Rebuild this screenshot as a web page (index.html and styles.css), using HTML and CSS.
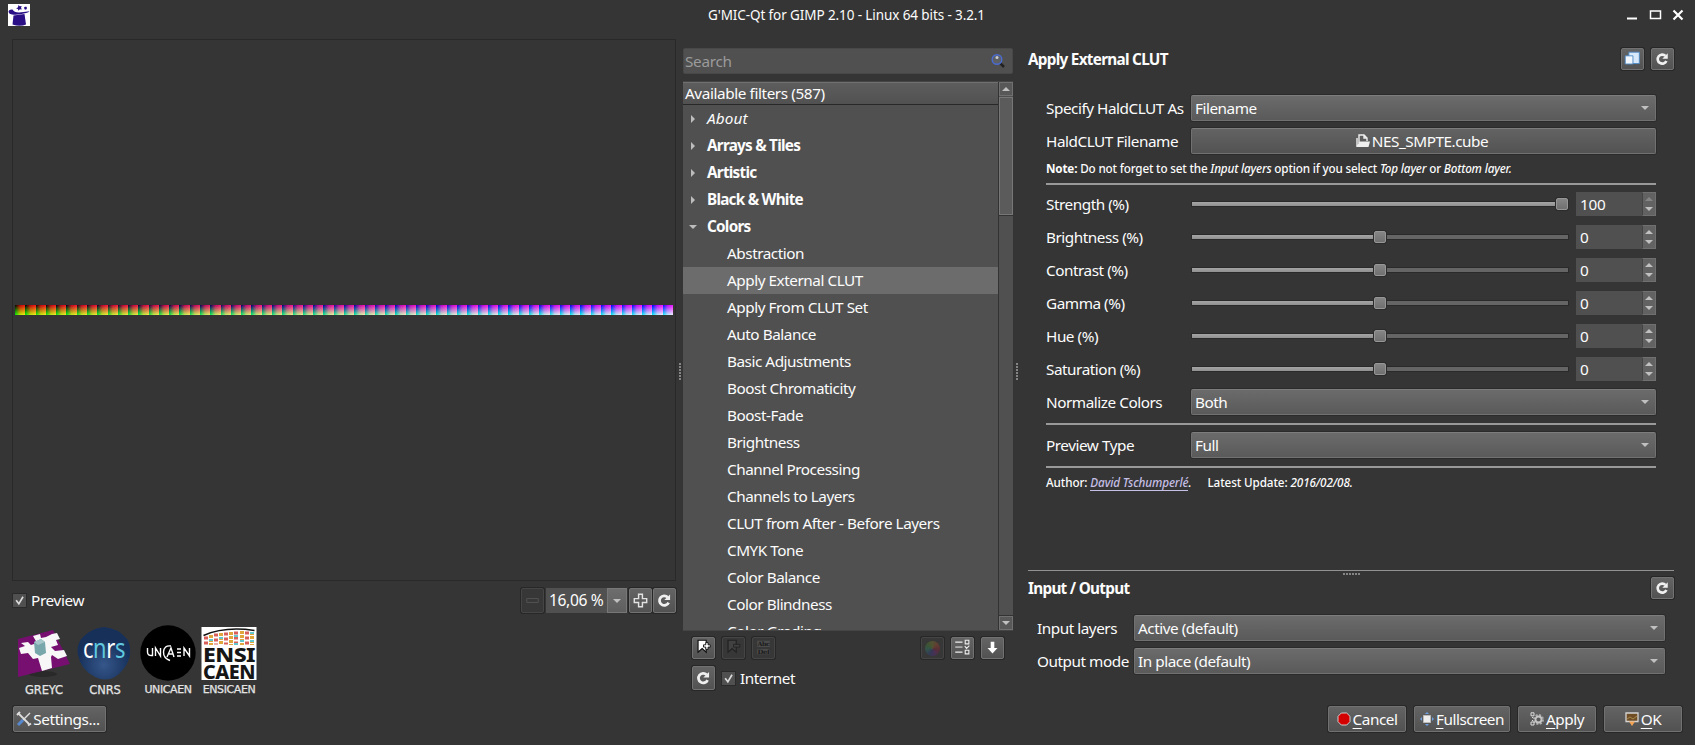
FILE: index.html
```
<!DOCTYPE html>
<html lang="en">
<head>
<meta charset="utf-8">
<title>G'MIC-Qt for GIMP 2.10 - Linux 64 bits - 3.2.1</title>
<link rel="stylesheet" href="styles.css">
</head>
<body>
<svg class="sprite" aria-hidden="true">
  <symbol id="reload" viewBox="0 0 22 22"><path d="M15.3 13.2A5 5 0 1 1 14.3 7.6" fill="none" stroke="#f0f0f0" stroke-width="2.9"/><path d="M16.8 4.6v6h-6z" fill="#f0f0f0"/></symbol>
  <symbol id="check" viewBox="0 0 14 14"><path d="M3.4 6.8l2.9 3.8L10.8 3" fill="none" stroke="#dcdcdc" stroke-width="1.8"/></symbol>
</svg>
<header class="titlebar">
  <svg class="app-icon" viewBox="0 0 22 22"><path fill="#fff" d="M0 0h22v22H0z"/><g fill="#2a0f86"><path d="M5.500 11.500l11-1.500 1.500 10.500q-6 2.500-13.500 0z"/><path d="M.5 8q0-2.800 4-2.500Q6 8.500 11 8.500q4-.3 10.500-1.300Q21 8.300 18 9 10 11.500 4 10.500 1 10 .5 8z"/><path d="M10.500 1l1.200 1.300 2-.3-.7 1.700.8 1.800-2-.2-1.300 1.500-.6-1.800L8 4.300l1.900-.9z"/><path d="M16 3.500l1-.7 1.500 0 .5 1.500-1 1.400-1.500-.4z"/></g></svg>
  <h1>G'MIC-Qt for GIMP 2.10 - Linux 64 bits - 3.2.1</h1>
  <svg class="window-controls" viewBox="0 0 60 22"><path d="M0 14.500h10" stroke="#fff" stroke-width="2"/><path d="M23.500 7h10v7.500h-10zM23 7h11" fill="none" stroke="#fff" stroke-width="1.500"/><path d="M46.500 6.500l9 9m0-9l-9 9" stroke="#fff" stroke-width="2.200"/></svg>
</header>

<main>
  <section class="preview-panel">
    <div class="preview"><div class="clut-strip"></div></div>
    <div class="preview-bar">
      <svg class="checkbox"><use href="#check"/></svg><span class="grow">Preview</span>
      <span class="btn off"><svg viewBox="0 0 22 24"><path d="M5 10h12v4H5z" fill="none" stroke="#555"/></svg></span>
      <span class="zoom"><span>16,06 %</span><i class="zoom-drop"><b class="down"></b></i></span>
      <span class="btn"><svg viewBox="0 0 22 24"><path d="M9 5.500h4v4.500h4.500v4H13v4.500H9V14H4.500v-4H9z" fill="none" stroke="#e2e2e2" stroke-width="1.500"/></svg></span>
      <span class="btn"><svg viewBox="0 0 22 22"><use href="#reload"/></svg></span>
    </div>
    <div class="logos">
      <figure class="greyc"><svg viewBox="0 0 56 58"><ellipse cx="27" cy="49" rx="14" ry="3" fill="#292929"/><path fill="#760f70" d="M2 14L37 5l17 34L2 52z"/><path fill="#f7f7f7" d="M17 11l7-2 1 4 5-1 6-3 5-1 3 6-4 1 2 5-7 2 4 4 9-1 3 6-9 3-6-4-1 2 1 11-10 3-4-13-5 1-5-6-7 1-2-6 6-2-4-3 7-1 3 3 6-2z"/><path fill="#77a6ab" d="M18 17l7-3 4 3 1 11-6 3-5-3z"/><path fill="#a6c7ca" d="M18 17l7-3 4 3-7 3z"/></svg><figcaption>GREYC</figcaption></figure>
      <figure class="cnrs"><svg viewBox="0 0 56 58"><defs><radialGradient id="sea" cx="50%" cy="72%"><stop offset="0" stop-color="#36578b"/><stop offset="1" stop-color="#16305a"/></radialGradient></defs><path fill="url(#sea)" d="M27 2q14 1 23 12 4 6 3 17-4 14-15 21-10 5-20 0Q4 45 1 30-1 19 6 12 15 3 27 2z"/><text y="33" font-family="Noto Sans" font-size="28" textLength="42" lengthAdjust="spacingAndGlyphs" x="6"><tspan fill="#fff">c</tspan><tspan fill="#60c8df">n</tspan><tspan fill="#fff">r</tspan><tspan fill="#60c8df">s</tspan></text></svg><figcaption>CNRS</figcaption></figure>
      <figure class="unicaen"><svg viewBox="0 0 56 58"><circle cx="28" cy="28" r="27.700" fill="#000"/><g fill="none" stroke="#fff" stroke-width="1.400"><path d="M7.500 23v4q0 4 5 3.500V23m3 8v-8l5 8v-8M31 21q-7-1-7.500 6-.2 6 6.500 8.500M27 32l4-9 3 9m-5-3h4M37 24h4m-4 3.500h4m-4 3.500h4M44 31v-8l5.500 8v-8"/></g></svg><figcaption>UNICAEN</figcaption></figure>
      <figure class="ensi"><svg viewBox="0 0 56 58"><path fill="#fff" d="M.5 2h55v53H.5z"/><g fill="none" stroke-width="4"><path stroke="#d9605a" stroke-dasharray="3 2" d="M5 11.500v8M15 8.500v11M25 7.500v12M35 6.500v13M46 6.500v13"/><path stroke="#e0a53c" stroke-dasharray="3 1" d="M10 10v10M20 8v12M30 7v13M41 6v14M51 7v13"/><path stroke="#63c7cf" stroke-dasharray="2 6" d="M10 14v6M20 12v8M35 10v10M51 7v13M41 15v5"/></g><path d="M2.500 10.500Q24 1 53.500 5.500" fill="none" stroke="#111" stroke-width="1.500"/><g fill="#161616" font-family="Noto Sans" font-weight="800" font-size="19"><text x="2" y="36.500" textLength="52" lengthAdjust="spacingAndGlyphs">ENSI</text><text x="2" y="53.500" textLength="52" lengthAdjust="spacingAndGlyphs">CAEN</text></g></svg><figcaption>ENSICAEN</figcaption></figure>
    </div>
  </section>

  <div class="grip"></div>

  <section class="filters-panel">
    <div class="search"><span>Search</span><svg viewBox="0 0 16 16"><path d="M10 10l4 4" stroke="#222" stroke-width="2.500"/><circle cx="7" cy="6.500" r="4.800" fill="#5d6064" stroke="#4a6bd0" stroke-width="1.400"/><circle cx="7" cy="4.500" r="1.500" fill="#c9ccd0"/></svg></div>
    <div class="tree">
      <div class="tree-list">
        <div class="tree-head">Available filters (587)</div>
        <ul>
          <li class="cat about"><em>About</em></li>
          <li class="cat bold">Arrays &amp; Tiles</li>
          <li class="cat bold">Artistic</li>
          <li class="cat bold">Black &amp; White</li>
          <li class="cat bold open">Colors</li>
          <li>Abstraction</li>
          <li class="selected">Apply External CLUT</li>
          <li>Apply From CLUT Set</li>
          <li>Auto Balance</li>
          <li>Basic Adjustments</li>
          <li>Boost Chromaticity</li>
          <li>Boost-Fade</li>
          <li>Brightness</li>
          <li>Channel Processing</li>
          <li>Channels to Layers</li>
          <li>CLUT from After - Before Layers</li>
          <li>CMYK Tone</li>
          <li>Color Balance</li>
          <li>Color Blindness</li>
          <li>Color Grading</li>
        </ul>
      </div>
      <div class="scrollbar"><i class="cap"><b class="up"></b></i><i class="thumb"></i><i class="track"></i><i class="cap"><b class="down"></b></i></div>
    </div>
    <div class="tools">
      <span class="btn"><svg viewBox="0 0 22 22"><path d="M5 2.500h9v13l-4.500-4-4.500 4z" fill="#fff" stroke="#111" stroke-width="1.300"/><path d="M13.500 5H16v2.500h2.500V10H16v2.500h-2.500V10H11V7.500h2.500z" fill="#fff" stroke="#111"/></svg></span>
      <span class="btn off"><svg viewBox="0 0 22 22"><path d="M5 2.500h9v13l-4.500-4-4.500 4z" fill="#414141" stroke="#222" stroke-width="1.300"/><path d="M11 7h7v3h-7z" fill="#414141" stroke="#222"/></svg></span>
      <span class="btn off"><svg viewBox="0 0 22 22"><path fill="#4b4b4b" d="M4 3h14v7H4zM4 12h14v6H4z"/><g fill="#1c1c1c" font-family="DejaVu Serif" font-size="6.500" font-weight="700"><text x="4.500" y="8.500" textLength="13" lengthAdjust="spacingAndGlyphs">Abc</text><text x="4.500" y="17.500" textLength="13" lengthAdjust="spacingAndGlyphs">Def</text></g></svg></span>
      <span class="btn off push"><i class="wheel"></i></span>
      <span class="btn"><svg viewBox="0 0 22 22"><path d="M3 4.500h8M3 15.500h8" stroke="#eee" stroke-width="1.300"/><path d="M3 10h8" stroke="#aaa" stroke-width="2"/><path d="M14 2.500h4v4h-4zM14 13.500h4v4h-4zM13.500 9l2 2.500 3-3" fill="none" stroke="#eee" stroke-width="1.200"/></svg></span>
      <span class="btn"><svg viewBox="0 0 22 22"><path d="M9 4h4v7h3.500L11 17l-5.500-6H9z" fill="#fff"/></svg></span>
    </div>
    <div class="tools net">
      <span class="btn"><svg viewBox="0 0 22 22"><use href="#reload"/></svg></span>
      <svg class="checkbox"><use href="#check"/></svg><span>Internet</span>
    </div>
  </section>

  <div class="grip"></div>

  <section class="params-panel">
    <div class="panel-head"><h2>Apply External CLUT</h2>
      <span class="btn"><svg viewBox="0 0 22 22"><path d="M7 3.500h11.500V16H7z" fill="#d7e8fa" stroke="#4c89c4"/><path d="M3 7.500h8.500v9H3z" fill="#f3f8fe" stroke="#4c89c4"/></svg></span>
      <span class="btn"><svg viewBox="0 0 22 22"><use href="#reload"/></svg></span>
    </div>
    <div class="form">
      <div class="row"><label>Specify HaldCLUT As</label><div class="combo">Filename<b class="down"></b></div></div>
      <div class="row"><label>HaldCLUT Filename</label><div class="file"><svg viewBox="0 0 14 14"><path d="M3 9V1h5l3 3v3M8 1v3h3M1 12V4" fill="none" stroke="#eee" stroke-width="1.400"/><path d="M3.500 7.500H14L12.500 13H0z" fill="#eee"/></svg>NES_SMPTE.cube</div></div>
      <p class="note"><strong>Note:</strong> Do not forget to set the <em>Input layers</em> option if you select <em>Top layer</em> or <em>Bottom layer.</em></p>
      <hr>
      <div class="row slider-row"><label>Strength (%)</label><div class="slider"><i class="fill full"></i><i class="knob"></i></div><div class="spin">100<i class="steps max"><b class="up"></b><b class="down"></b></i></div></div>
      <div class="row slider-row"><label>Brightness (%)</label><div class="slider"><i class="fill"></i><i class="knob"></i></div><div class="spin">0<i class="steps"><b class="up"></b><b class="down"></b></i></div></div>
      <div class="row slider-row"><label>Contrast (%)</label><div class="slider"><i class="fill"></i><i class="knob"></i></div><div class="spin">0<i class="steps"><b class="up"></b><b class="down"></b></i></div></div>
      <div class="row slider-row"><label>Gamma (%)</label><div class="slider"><i class="fill"></i><i class="knob"></i></div><div class="spin">0<i class="steps"><b class="up"></b><b class="down"></b></i></div></div>
      <div class="row slider-row"><label>Hue (%)</label><div class="slider"><i class="fill"></i><i class="knob"></i></div><div class="spin">0<i class="steps"><b class="up"></b><b class="down"></b></i></div></div>
      <div class="row slider-row"><label>Saturation (%)</label><div class="slider"><i class="fill"></i><i class="knob"></i></div><div class="spin">0<i class="steps"><b class="up"></b><b class="down"></b></i></div></div>
      <div class="row"><label>Normalize Colors</label><div class="combo">Both<b class="down"></b></div></div>
      <hr class="tight">
      <div class="row"><label>Preview Type</label><div class="combo">Full<b class="down"></b></div></div>
      <hr class="tight">
      <p class="author">Author: <a><em>David Tschumperlé</em></a><em>.</em><span class="update">Latest Update: <em>2016/02/08.</em></span></p>
    </div>
    <div class="divider"><i></i></div>
    <div class="panel-head"><h2>Input / Output</h2><span class="btn"><svg viewBox="0 0 22 22"><use href="#reload"/></svg></span></div>
    <div class="form io">
      <div class="row"><label>Input layers</label><div class="combo">Active (default)<b class="down"></b></div></div>
      <div class="row"><label>Output mode</label><div class="combo">In place (default)<b class="down"></b></div></div>
    </div>
  </section>
</main>

<footer>
  <button class="settings"><svg viewBox="0 0 16 16"><path d="M2 2l11 11" stroke="#ddd" stroke-width="1.800"/><path d="M1 4l3-3M12 14.500l3-2" stroke="#ddd" stroke-width="2"/><path d="M14 2L7 9" stroke="#ddd" stroke-width="1.500"/><path d="M7 9l-5 5" stroke="#5588cf" stroke-width="3"/></svg>Settings...</button>
  <button class="w78"><svg viewBox="0 0 14 14"><path d="M4.300 1h5.400L13 4.300v5.400L9.700 13H4.300L1 9.700V4.300z" fill="#d40000" stroke="#ccc"/></svg><span><u>C</u>ancel</span></button>
  <button class="w96"><svg viewBox="0 0 14 14"><path d="M3.500 3.500h7v7h-7z" fill="#eee" stroke="#bbb"/><path d="M7 0l2 2H5zM7 14l2-2H5zM0 7l2-2v4zM14 7l-2-2v4z" fill="#6b9fe0"/></svg><span><u>F</u>ullscreen</span></button>
  <button class="w78"><svg viewBox="0 0 14 14"><circle cx="8.500" cy="7.500" r="4.300" fill="none" stroke="#aaa" stroke-width="2.400" stroke-dasharray="2 1.370"/><circle cx="8.500" cy="7.500" r="3" fill="none" stroke="#c5c5c5" stroke-width="1.800"/><path d="M1 .8h3v3H1zM1 10h3v3H1zM2.500 5v1M2.500 8v1" fill="none" stroke="#ddd"/></svg><span><u>A</u>pply</span></button>
  <button class="w78"><svg viewBox="0 0 14 14"><path d="M1 1h12v8.500H1z" fill="#6f4e25" stroke="#d5d5d5" stroke-width="1.300"/><path d="M2 7l3-2 3 2 4-3" stroke="#a88850" fill="none"/><path d="M4 9.500h6L7 14z" fill="#f3a456"/></svg><span><u>O</u>K</span></button>
</footer>
</body>
</html>
```
FILE: styles.css
```
* { box-sizing: border-box; margin: 0; padding: 0; }
html { background: #353535; }
body {
  width: 1695px; height: 745px; overflow: hidden;
  display: flex; flex-direction: column;
  background: #353535; color: #fcfcfc;
  font: 15.3px/22px "Noto Sans", sans-serif; letter-spacing: -0.46px;
  white-space: nowrap;
}
i, b.up, b.down { display: block; }
.sprite { position: absolute; width: 0; height: 0; }
.grow { flex: 1; }

.titlebar { height: 31px; padding: 4px 11px 0 8px; display: flex; justify-content: space-between; flex: none; }
.app-icon { width: 22px; height: 22px; margin-right: 36px; }
.titlebar h1 { font-size: 13.5px; font-weight: 400; letter-spacing: -0.1px; }
.window-controls { width: 60px; height: 22px; margin-right: -3px; }

main { display: flex; height: 675px; flex: none; }

.btn {
  width: 23px; height: 23px; flex: none;
  border: 1px solid #727272; border-radius: 2px;
  background: linear-gradient(#646464, #525252);
  box-shadow: 0 0 0 1px #272727;
}
.btn svg { display: block; width: 100%; height: 100%; }
.btn.off { background: #373737; border-color: #454545; }
.checkbox {
  width: 13px; height: 13px; flex: none;
  background: #505050; box-shadow: 0 0 0 1px #2a2a2a; margin: 0 5px 0 1px;
}
.up, .down { width: 0; height: 0; border: 4px solid transparent; }
.down { border-top: 4px solid #c0c0c0; border-bottom: 0; }
.up { border-bottom: 4px solid #c0c0c0; border-top: 0; }

.preview-panel { width: 676px; padding: 8px 0 0 12px; flex: none; }
.preview { height: 542px; border: 1px solid #292929; padding: 265px 2px 0; }
/* HaldCLUT preview: blue grows along the strip, red across each tile, green downwards */
.clut-strip {
  height: 10px;
  background:
    linear-gradient(90deg, #000, #00d 70%, #00f),
    repeating-linear-gradient(90deg, #000 0, #b00 5px, #f01010 10.28px),
    linear-gradient(#000, #0e0);
  background-blend-mode: screen;
}
.preview-bar { height: 26px; margin-top: 6px; display: flex; align-items: center; letter-spacing: -0.36px; }
.preview-bar .btn { height: 25px; margin-left: 1px; }
.zoom { display: flex; width: 81px; height: 25px; margin: 0 1px 0 2px; background: #505050; line-height: 25px; padding-left: 3px; justify-content: space-between; font-size: 15.6px; }
.zoom-drop { width: 20px; background: linear-gradient(#6d6d6d, #5f5f5f); border: 1px solid #777; padding: 10px 0 0 5px; }
.logos { display: flex; margin: 12px 0 0 2px; }
.logos figure { width: 56px; text-align: center; }
.logos svg { display: block; width: 56px; height: 58px; }
.logos figcaption { font: 11.5px/14px "DejaVu Sans", sans-serif; color: #e4e4e4; letter-spacing: -0.1px; -webkit-text-stroke: 0.25px #e4e4e4; }
.logos .greyc { padding-left: 2px; margin-right: -2px; width: 58px; }
.logos .cnrs { margin-left: 7px; }
.logos .unicaen { margin-left: 7px; }
.logos .ensi { margin-left: 5px; }
.logos .unicaen figcaption, .logos .ensi figcaption { font-size: 11px; letter-spacing: -0.4px; }

.grip {
  width: 2px; height: 17px; margin: 332px 0 0 3px; flex: none;
  background: repeating-linear-gradient(#858585 0 2px, transparent 2px 3px);
}

.filters-panel { width: 330px; margin: 17px 0 0 2px; flex: none; }
.search { height: 26px; background: #505050; border: 1px solid #484848; border-radius: 2px; color: #9b9b9b; padding: 0 6px 1px 1px; display: flex; justify-content: space-between; align-items: center; }
.search span { letter-spacing: -0.3px; }
.search svg { width: 16px; height: 16px; }
.tree { display: flex; height: 550px; margin-top: 7px; background: #505050; border: 1px solid #454545; border-left: 0; border-right: 0; overflow: hidden; }
.tree-list { width: 315px; }
.tree-head { height: 23px; padding-left: 2px; line-height: 20px; letter-spacing: -0.4px; background: linear-gradient(#5d5d5d, #515151); border-top: 1px solid #707070; border-bottom: 1px solid #282828; }
.tree ul { list-style: none; }
.tree li { height: 27px; line-height: 27px; padding-left: 44px; }
.tree .cat { padding-left: 8px; display: flex; align-items: center; }
.cat::before { content: ""; border: 4px solid transparent; border-left-color: #bdbdbd; border-right: 0; margin-right: 12px; }
.cat.open::before { border: 4px solid transparent; border-top-color: #bdbdbd; border-bottom: 0; margin: 0 10px 0 -2px; }
.about em { letter-spacing: 0.15px; }
.bold { font-weight: 700; letter-spacing: -0.76px; }
.selected { background: #6c6c6c; }
.scrollbar { width: 15px; border-left: 1px solid #333; display: flex; flex-direction: column; }
.cap { height: 14px; border: 1px solid #707070; padding: 4px 2px; background: #585858; flex: none; }
.thumb { height: 118px; margin-top: 1px; border: 1px solid #777; background: #5b5b5b; flex: none; box-shadow: 0 1px 0 #333; }
.track { flex: 1; border-bottom: 1px solid #333; }
.tools { display: flex; margin: 6px 9px 0; gap: 7px; align-items: center; }
.tools .btn { height: 22px; }
.push { margin-left: auto; }
.net { margin-top: 7px; }
.net .btn { height: 24px; }
.net .checkbox { margin: 0 -2px 0 0; }
.wheel { width: 15px; height: 15px; margin: 3px; border-radius: 50%; opacity: .3; background: conic-gradient(#8f8c24, #c04a26, #a01a34, #71209a, #2b3e9c, #24917b, #4a9a2b, #8f8c24); }

.params-panel { width: 646px; margin: 17px 0 0 10px; flex: none; }
.panel-head { display: flex; align-items: center; height: 22px; gap: 7px; margin-bottom: 1px; }
.panel-head h2 { font-size: 15.3px; font-weight: 700; letter-spacing: -0.72px; flex: 1; }
.panel-head .btn { height: 22px; }
.form { padding: 24px 18px 0; }
.row { display: flex; align-items: center; height: 26px; margin-bottom: 7px; }
.row label { width: 145px; flex: none; }
.combo, .file {
  flex: 1; height: 26px; line-height: 25px; padding: 0 6px 0 3px;
  border: 1px solid #717171; border-top-color: #7d7d7d; border-radius: 2px;
  background: linear-gradient(#6b6b6b, #5a5a5a); box-shadow: 0 0 0 1px #2b2b2b;
  display: flex; justify-content: space-between; align-items: center;
}
.file { justify-content: center; gap: 2px; background: linear-gradient(#636363, #535353); }
.file svg { width: 14px; height: 14px; }
.note, .author { font-size: 11.7px; line-height: 16px; font-weight: 500; letter-spacing: -0.17px; }
.note { margin-top: -1px; }
.author { margin-top: -1px; letter-spacing: -0.1px; }
hr { height: 2px; border: 0; background: #999; margin: 7px 0 6px; }
hr.tight { margin: 8px 0 7px; }
.slider { width: 376px; height: 4px; margin-left: 1px; background: #656565; position: relative; box-shadow: 0 0 0 1px #2a2a2a; }
.fill { width: 50%; height: 4px; background: linear-gradient(#a5a5a5, #909090); }
.fill.full { width: 100%; }
.knob { position: absolute; left: 182px; top: -4px; width: 12px; height: 12px; border: 1px solid #969696; border-radius: 2px; background: linear-gradient(#858585, #707070); box-shadow: 0 0 0 1px #2b2b2b; }
.full + .knob { left: 364px; }
.spin { width: 80px; height: 24px; margin-left: auto; padding-left: 4px; background: #505050; line-height: 24px; letter-spacing: -0.3px; display: flex; justify-content: space-between; }
.steps { width: 14px; background: #626262; border: 1px solid #707070; border-left-color: #444; padding: 4px 2px; display: flex; flex-direction: column; justify-content: space-between; }
.max .up { border-bottom-color: #858585; }
.author a { color: #c6bfe6; border-bottom: 1px solid #c6bfe6; }
.update { margin-left: 16px; }
.divider { border-top: 1px solid #929292; height: 7px; margin-top: 80px; }
.divider i { width: 17px; height: 2px; margin: 2px auto 0; background: repeating-linear-gradient(90deg, #858585 0 2px, transparent 2px 3px); }
.form.io { padding: 15px 9px 0; }
.io label { width: 97px; }

footer { display: flex; padding: 0 13px; gap: 8px; flex: none; }
button {
  height: 26px; display: flex; align-items: center; justify-content: center; gap: 2px;
  font: inherit; letter-spacing: inherit; color: inherit;
  border: 1px solid #717171; border-radius: 2px; background: linear-gradient(#636363, #525252); box-shadow: 0 0 0 1px #282828;
}
button svg { width: 14px; height: 14px; }
button u { text-underline-offset: 3px; }
.settings { width: 93px; margin-right: auto; padding-right: 3px; gap: 1px; letter-spacing: -0.36px; }
.settings svg { width: 16px; height: 16px; }
.w78 { width: 78px; }
.w96 { width: 96px; }
```
